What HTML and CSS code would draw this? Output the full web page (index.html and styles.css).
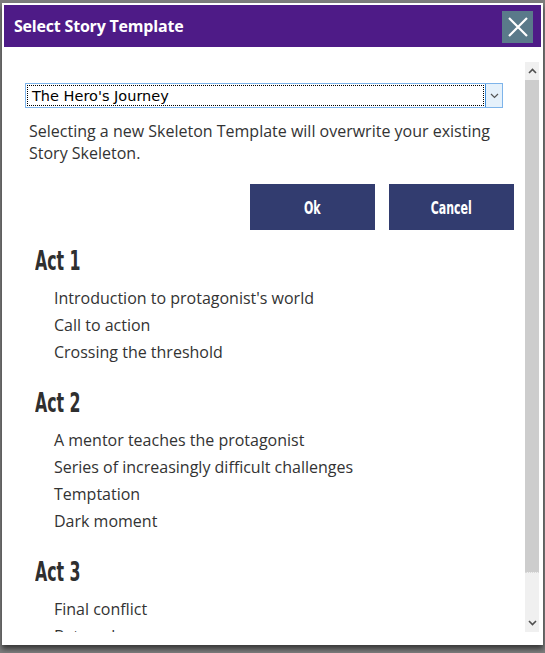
FILE: index.html
```html
<!DOCTYPE html>
<html>
<head>
<meta charset="utf-8">
<link rel="stylesheet" href="styles.css">
</head>
<body>
<div class="dialog">
  <div class="header">
    <div class="title">Select Story Template</div>
    <div class="close">
      <svg width="20" height="20" viewBox="0 0 20 20"><path d="M1 1 L19 19 M19 1 L1 19" stroke="#fff" stroke-width="2.2" fill="none"/></svg>
    </div>
  </div>
  <div class="body">
    <div class="content">
      <div class="select">
        <div class="select-text"><span class="focus">The Hero's Journey</span></div>
        <div class="select-btn">
          <svg width="9" height="6" viewBox="0 0 9 6"><path d="M1 1 L4.5 4.5 L8 1" stroke="#555" stroke-width="1.2" fill="none"/></svg>
        </div>
      </div>
      <p class="warning">Selecting a new Skeleton Template will overwrite your existing Story Skeleton.</p>
      <div class="buttons">
        <div class="btn"><span class="narrow">Ok</span></div>
        <div class="btn"><span class="narrow">Cancel</span></div>
      </div>
      <div class="act">
        <h2><span class="narrow">Act 1</span></h2>
        <ul>
          <li>Introduction to protagonist's world</li>
          <li>Call to action</li>
          <li>Crossing the threshold</li>
        </ul>
      </div>
      <div class="act">
        <h2><span class="narrow">Act 2</span></h2>
        <ul>
          <li>A mentor teaches the protagonist</li>
          <li>Series of increasingly difficult challenges</li>
          <li>Temptation</li>
          <li>Dark moment</li>
        </ul>
      </div>
      <div class="act">
        <h2><span class="narrow">Act 3</span></h2>
        <ul>
          <li>Final conflict</li>
          <li>Betrayal</li>
          <li>Resolution</li>
        </ul>
      </div>
    </div>
    <div class="scrollbar">
      <div class="sb-arrow"><svg width="9" height="6" viewBox="0 0 9 6"><path d="M1 5 L4.5 1.5 L8 5" stroke="#505050" stroke-width="1.6" fill="none"/></svg></div>
      <div class="sb-thumb"></div>
      <div class="sb-track"></div>
      <div class="sb-arrow down"><svg width="9" height="6" viewBox="0 0 9 6"><path d="M1 1 L4.5 4.5 L8 1" stroke="#505050" stroke-width="1.6" fill="none"/></svg></div>
    </div>
  </div>
</div>
</body>
</html>
```

FILE: styles.css
```css
html, body {
  margin: 0;
  padding: 0;
}
body {
  background: #7d7d7d;
  width: 545px;
  height: 653px;
  overflow: hidden;
  font-family: "Open Sans", "Noto Sans", sans-serif;
}
.dialog {
  margin: 3px 2px 0 2px;
  width: 541px;
  height: 642px;
  box-sizing: border-box;
  background: #fff;
  padding: 2px;
  box-shadow: 0 4px 5px rgba(0, 0, 0, 0.55);
  display: flex;
  flex-direction: column;
}
.header {
  height: 42px;
  flex: none;
  background: #4e1b87;
  display: flex;
  align-items: flex-start;
  justify-content: space-between;
  padding: 0 8px 0 10px;
}
.title {
  color: #fff;
  font-weight: 700;
  font-size: 16px;
  line-height: 42px;
  letter-spacing: -0.2px;
}
.close {
  margin-top: 6px;
  width: 31px;
  height: 32px;
  background: #5a7a8a;
  display: flex;
  align-items: center;
  justify-content: center;
}
.body {
  flex: 1;
  display: flex;
  padding: 15px 2px 11px 0;
  min-height: 0;
}
.content {
  flex: 1;
  overflow: hidden;
  padding: 21px 11px 0 21px;
}
.select {
  width: 478px;
  height: 25px;
  box-sizing: border-box;
  border: 1px solid #7eb4ea;
  display: flex;
}
.select-text {
  flex: 1;
  padding: 1px;
  display: flex;
}
.focus {
  flex: 1;
  border: 1px dotted #000;
  font-family: "DejaVu Sans", sans-serif;
  font-size: 14.5px;
  line-height: 20px;
  padding-left: 4px;
  color: #000;
}
.select-btn {
  width: 16px;
  background: #e5f1fb;
  border-left: 1px solid #3c8bd6;
  display: flex;
  align-items: center;
  justify-content: center;
}
.warning {
  margin: 12px 0 0 4px;
  font-size: 16px;
  line-height: 22px;
  color: #333;
}
.buttons {
  margin-top: 20px;
  display: flex;
  justify-content: flex-end;
  gap: 14px;
}
.btn {
  width: 125px;
  height: 46px;
  background: #323c6f;
  color: #fff;
  font-family: "DejaVu Sans Condensed", sans-serif;
  font-weight: 700;
  font-size: 18px;
  display: flex;
  align-items: center;
  justify-content: center;
}
.btn .narrow {
  display: inline-block;
  transform: scaleX(0.68);
}
.act {
  margin-top: 16px;
}
.act + .act {
  margin-top: 22px;
}
.act h2 {
  margin: 0 0 0 10px;
  font-family: "DejaVu Sans Condensed", sans-serif;
  font-weight: 700;
  font-size: 27px;
  line-height: 30px;
  color: #2f2f2f;
}
.act h2 .narrow {
  display: inline-block;
  transform: scaleX(0.65);
  transform-origin: left center;
}
.act ul {
  list-style: none;
  margin: 9px 0 0 0;
  padding: 0 0 0 29px;
}
.act li {
  font-size: 16px;
  line-height: 27px;
  color: #333;
}
.scrollbar {
  width: 14px;
  flex: none;
  display: flex;
  flex-direction: column;
  background: #f0f0f0;
}
.sb-arrow {
  height: 18px;
  display: flex;
  align-items: center;
  justify-content: center;
}
.sb-thumb {
  height: 492px;
  background: #cdcdcd;
}
.sb-track {
  flex: 1;
  border-top: 1px dotted #d8d8d8;
}
.sb-arrow.down {
  height: 18px;
}
```
